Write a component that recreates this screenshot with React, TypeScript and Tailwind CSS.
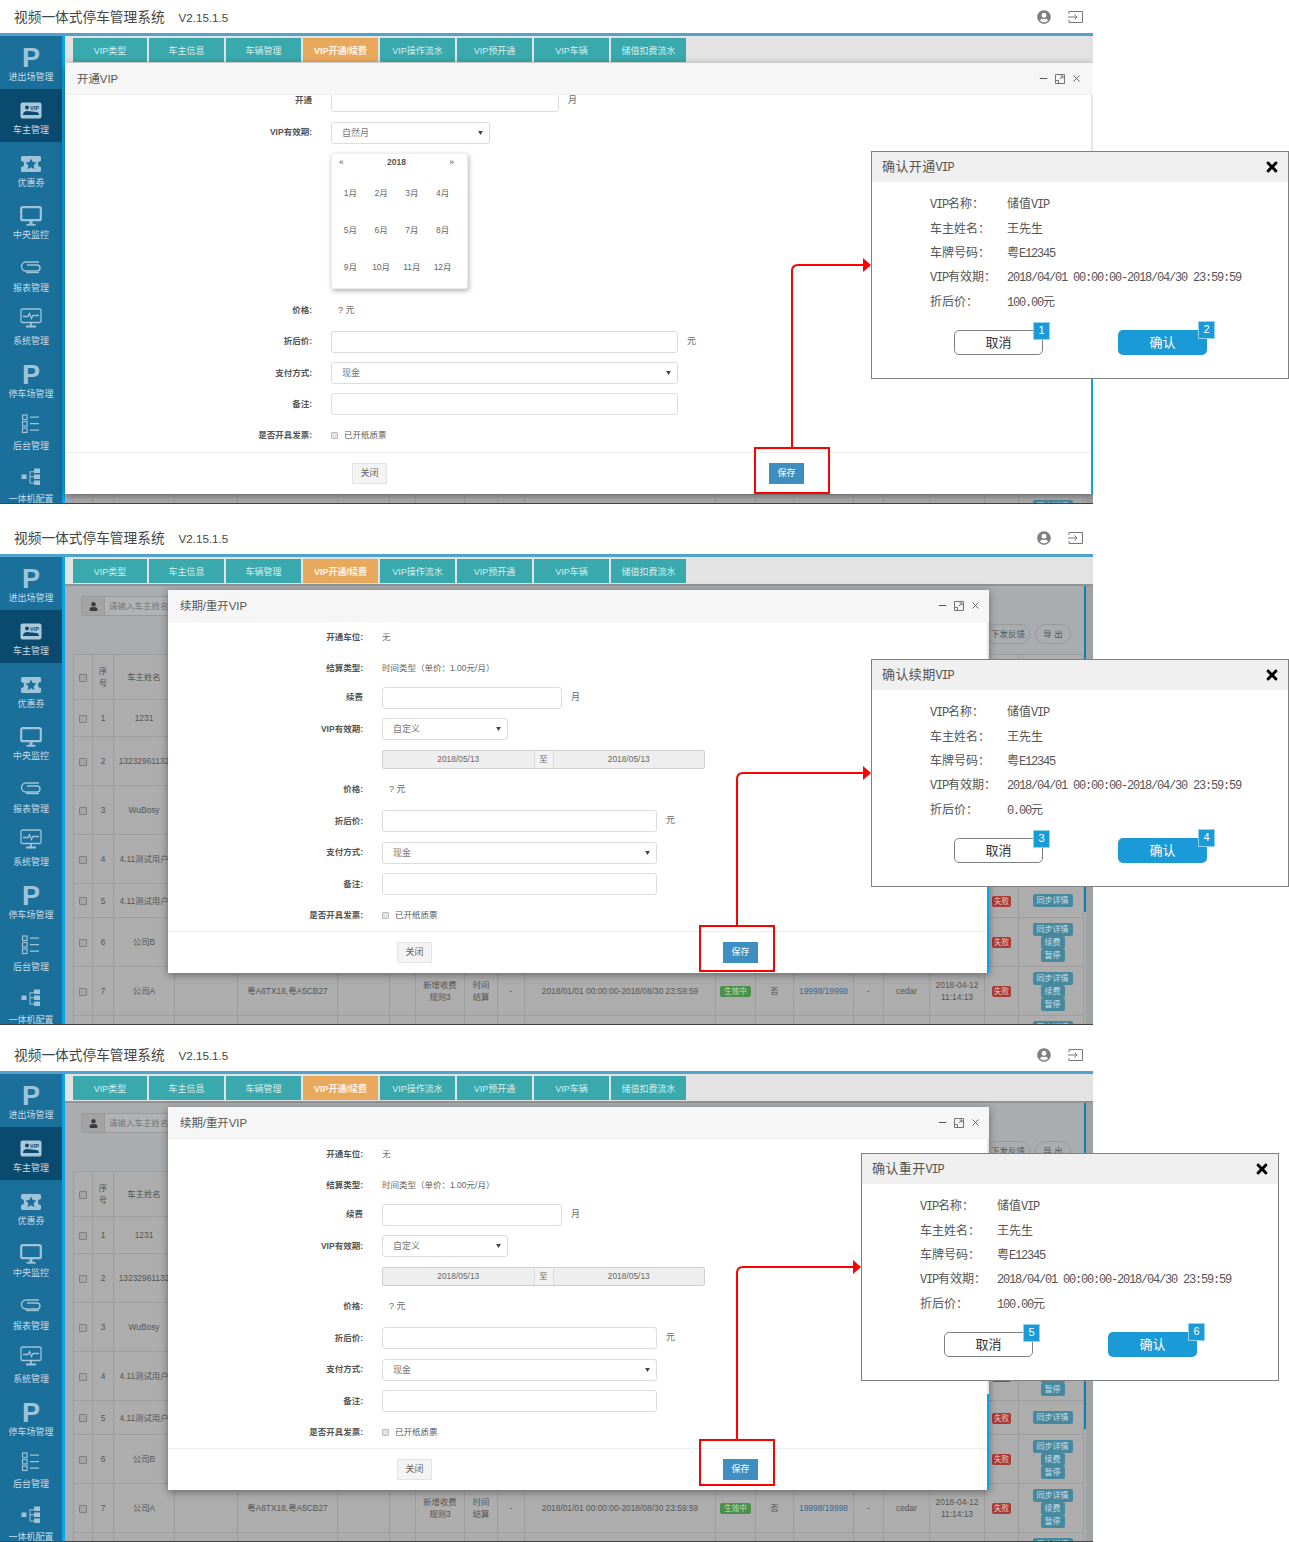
import { ReactNode } from "react";
import { Minus, X } from "lucide-react";
import { FaTimes, FaUser, FaUserCircle } from "react-icons/fa";

const tabs = [
  { label: "VIP类型", w: "w-[74px]" },
  { label: "车主信息", w: "w-[75px]" },
  { label: "车辆管理", w: "w-[75px]" },
  { label: "VIP开通/续费", w: "w-[75px]", active: true },
  { label: "VIP操作流水", w: "w-[75px]" },
  { label: "VIP预开通", w: "w-[75px]" },
  { label: "VIP车辆", w: "w-[75px]" },
  { label: "储值扣费流水", w: "w-[75px]" },
];

function PIcon() {
  return <span className="block text-[27px] leading-[22px] font-bold text-[#9fc4d8]">P</span>;
}

function CardIcon() {
  return (
    <svg viewBox="0 0 22 17" className="h-[17px] w-[22px]">
      <rect width="21" height="16" x="0.5" y="0.5" rx="2" fill="#a9c9da" />
      <circle cx="7" cy="5.5" r="2" fill="#0a4a6e" />
      <path d="M3 13c0-3 2-4 4-4s7 1 9 1 3 1 3 3z" fill="#0a4a6e" />
      <text x="10" y="7.5" fontSize="5.5" fontWeight="700" fill="#0a4a6e" fontFamily="Liberation Sans">VIP</text>
    </svg>
  );
}

function TicketIcon() {
  return (
    <svg viewBox="0 0 22 18" className="h-[18px] w-[22px]">
      <path
        d="M2.500 1h17A1.500 1.500 0 0 1 21 2.500V6a3 3 0 0 0 0 6v3.500a1.500 1.500 0 0 1-1.500 1.500h-17A1.500 1.500 0 0 1 1 15.500V12a3 3 0 0 0 0-6V2.500A1.500 1.500 0 0 1 2.500 1z"
        fill="#9fc4d8"
      />
      <path d="M11 3.500l1.700 3.600 3.800.5-2.800 2.700.7 3.900-3.400-1.900-3.400 1.900.7-3.900-2.800-2.700 3.800-.5z" fill="#1b6f9b" />
    </svg>
  );
}

function MonitorIcon() {
  return (
    <svg viewBox="0 0 22 20" className="h-[20px] w-[22px]" fill="none" stroke="#9fc4d8">
      <rect x="1.200" y="1.200" width="19.600" height="13" rx="1.500" strokeWidth="2.200" />
      <path d="M11 15v3" strokeWidth="3" />
      <path d="M6.500 18.800h9" strokeWidth="1.800" />
    </svg>
  );
}

function ClipIcon() {
  return (
    <svg viewBox="0 0 22 14" className="mb-[4px] h-[14px] w-[22px]" fill="none" stroke="#9fc4d8" strokeWidth="1.400">
      <path d="M7 4h10a3 3 0 0 1 0 6H6a4.500 4.500 0 0 1 0-9h13" transform="translate(0 1)" />
      <path d="M19 12.500H6" />
    </svg>
  );
}

function PulseIcon() {
  return (
    <svg viewBox="0 0 22 20" className="mb-[8px] h-[20px] w-[22px]" fill="none" stroke="#9fc4d8" strokeWidth="1.300">
      <rect x="1" y="1" width="20" height="13.500" rx="1.500" />
      <path d="M3 8.500h5l1.500-3 2 5 1.500-3h6" />
      <path d="M11 15v3M6 18.500h10" strokeWidth="1.800" />
    </svg>
  );
}

function ListIcon() {
  return (
    <svg viewBox="0 0 20 20" className="mb-[6px] h-[20px] w-[20px]" fill="none" stroke="#9fc4d8" strokeWidth="1.200">
      <rect x="1.500" y="1" width="4.500" height="4.500" />
      <rect x="1.500" y="7.500" width="4.500" height="4.500" />
      <rect x="1.500" y="14" width="4.500" height="4.500" />
      <path d="M9 3.200h9M9 9.700h9M9 16.200h9" />
    </svg>
  );
}

function TreeIcon() {
  return (
    <svg viewBox="0 0 20 18" className="mb-[6px] h-[18px] w-[20px]" fill="#9fc4d8">
      <rect x="0.500" y="6.500" width="5" height="4.500" />
      <rect x="13" y="0.500" width="6" height="4.500" />
      <rect x="13" y="6.500" width="6" height="4.500" />
      <rect x="13" y="12.500" width="6" height="4.500" />
      <path d="M5 8.300h8v1H9.500v5.300H13v1H8.500V3.300H13v-1 2H9.500v4H5z" />
    </svg>
  );
}

const sideItems = [
  { label: "进出场管理", icon: <PIcon /> },
  { label: "车主管理", icon: <CardIcon />, active: true },
  { label: "优惠券", icon: <TicketIcon /> },
  { label: "中央监控", icon: <MonitorIcon /> },
  { label: "报表管理", icon: <ClipIcon /> },
  { label: "系统管理", icon: <PulseIcon /> },
  { label: "停车场管理", icon: <PIcon /> },
  { label: "后台管理", icon: <ListIcon /> },
  { label: "一体机配置", icon: <TreeIcon /> },
];

function Sidebar() {
  return (
    <aside className="relative flex w-[65px] shrink-0 flex-col overflow-hidden border-r-[3px] border-[#0aa5e8] bg-[#1b6f9b]">
      {sideItems.map((item) => (
        <div
          key={item.label}
          className={`flex h-[52.750px] shrink-0 flex-col items-center ${item.active ? "bg-[#0a4a6e]" : ""}`}
        >
          <div className="mt-[11px] flex h-[22px] items-center justify-center">{item.icon}</div>
          <span className="mt-[2px] text-[9px] leading-[12px] whitespace-nowrap text-[#c6dbe6]">{item.label}</span>
        </div>
      ))}
      <div className="absolute right-[-3px] bottom-0 h-[6px] w-[3px] bg-white" />
    </aside>
  );
}

const colClasses = [
  "w-[19px]", "w-[21px]", "w-[61px]", "w-[63px]", "w-[100px]", "w-[52px]", "w-[26px]", "w-[49px]", "w-[33px]", "w-[27px]",
  "w-[191px]", "w-[40px]", "w-[38px]", "w-[60px]", "w-[30px]", "w-[46px]", "w-[55px]", "w-[34px]", "w-[65px]",
];

const headers = ["", "序号", "车主姓名", "手机号码", "车牌号码", "车位", "组", "收费规则", "结算类型", "余额", "有效期", "状态", "纸质", "已用/总数", "备注", "操作员", "操作时间", "同步", "操作"];

const rows = [
  { h: "h-[37px]", no: 1, name: "1231", ops: 0 },
  { h: "h-[49px]", no: 2, name: "13232961132", ops: 1 },
  { h: "h-[49px]", no: 3, name: "WuBosy", ops: 1 },
  { h: "h-[49px]", no: 4, name: "4.11测试用户", ops: 3, fail: true },
  { h: "h-[34px]", no: 5, name: "4.11测试用户", ops: 1, fail: true },
  { h: "h-[49px]", no: 6, name: "公司B", ops: 3, fail: true },
  { h: "h-[49px]", no: 7, name: "公司A", ops: 3, fail: true, full: true },
  { h: "h-[49px]", no: 8, name: "公司C", ops: 3 },
];

function OpButton({ wide, children }: { wide?: boolean; children: ReactNode }) {
  return (
    <span
      className={`block h-[13px] rounded-[2px] bg-[#46899f] text-[8px] leading-[13px] text-[#c9dfe6] ${wide ? "w-[40px]" : "w-[24px]"}`}
    >
      {children}
    </span>
  );
}

function Cell({ children }: { children?: ReactNode }) {
  return <td className="overflow-hidden border-r border-b border-[#9d9d9d] p-0 text-center">{children}</td>;
}

function BoxMark() {
  return <span className="inline-block h-[8px] w-[8px] rounded-[1px] border border-[#808080] bg-[#a4a4a4] align-middle" />;
}

function BackTable() {
  return (
    <table className="w-[1010px] table-fixed border-collapse border-t border-l border-[#9d9d9d] bg-[#adadad] text-[8.400px] leading-[12px] text-[#555]">
      <colgroup>
        {colClasses.map((c, i) => (
          <col key={i} className={c} />
        ))}
      </colgroup>
      <thead>
        <tr className="h-[45px]">
          {headers.map((h, i) => (
            <th key={i} className={`overflow-hidden border-r border-b border-[#9d9d9d] p-0 text-center font-normal ${i === 1 ? "px-[5px]" : ""}`}>
              {i === 0 ? <BoxMark /> : h}
            </th>
          ))}
        </tr>
      </thead>
      <tbody>
        {rows.map((r) => (
          <tr key={r.no} className={r.h}>
            <Cell>
              <BoxMark />
            </Cell>
            <Cell>{r.no}</Cell>
            <Cell>
              <span className="whitespace-nowrap">{r.name}</span>
            </Cell>
            <Cell />
            <Cell>{r.full ? "粤A6TX18,粤A5CB27" : ""}</Cell>
            <Cell />
            <Cell />
            <Cell>{r.full ? <span className="inline-block w-[36px]">新增收费规则3</span> : ""}</Cell>
            <Cell>{r.full ? <span className="inline-block w-[18px]">时间结算</span> : ""}</Cell>
            <Cell>{r.full ? "-" : ""}</Cell>
            <Cell>{r.full ? <span className="whitespace-nowrap">2018/01/01 00:00:00-2018/08/30 23:59:59</span> : ""}</Cell>
            <Cell>
              {r.full && (
                <span className="inline-block h-[11px] rounded-[2px] bg-[#4a8f4a] px-[4px] text-[7.500px] leading-[11px] text-[#bfe0bf]">
                  生效中
                </span>
              )}
            </Cell>
            <Cell>{r.full ? "否" : ""}</Cell>
            <Cell>{r.full ? <span className="text-[#33688f]">19998/19998</span> : ""}</Cell>
            <Cell>{r.full ? "-" : ""}</Cell>
            <Cell>{r.full ? "cedar" : ""}</Cell>
            <Cell>{r.full ? "2018-04-12 11:14:13" : ""}</Cell>
            <Cell>
              {r.fail && (
                <span className="inline-block h-[11px] rounded-[2px] bg-[#a83a38] px-[2px] text-[7.500px] leading-[11px] text-[#e9c6c5]">
                  失败
                </span>
              )}
            </Cell>
            <Cell>
              {r.ops > 0 && (
                <div className="flex flex-col items-center pl-[3px]">
                  <OpButton wide>同步详情</OpButton>
                  {r.ops === 3 && <OpButton>续费</OpButton>}
                  {r.ops === 3 && <OpButton>暂停</OpButton>}
                </div>
              )}
            </Cell>
          </tr>
        ))}
      </tbody>
    </table>
  );
}

function BackContent() {
  return (
    <div className="relative min-h-0 flex-1 overflow-hidden border-t-2 border-[#909395] bg-[#a9adb0] pr-[10px] pl-[8px]">
      <div className="flex h-[68px] flex-col">
        <div className="mt-[10px] ml-[8px] flex h-[20px]">
          <span className="flex w-[24px] items-center justify-center rounded-l-[2px] border border-[#999] bg-[#a3a3a3]">
            <FaUser className="size-[9px] text-[#3a3a3a]" />
          </span>
          <span className="flex w-[150px] items-center border-y border-r border-[#999] bg-[#b0b3b5] pl-[4px] text-[8.500px] whitespace-nowrap text-[#777]">
            请输入车主姓名
          </span>
        </div>
        <div className="mt-[8px] flex justify-end gap-[5px] pr-[12px]">
          <span className="flex h-[20px] w-[44px] items-center justify-center rounded-full border border-[#999] text-[8.500px] text-[#555]">
            下发反馈
          </span>
          <span className="flex h-[20px] w-[36px] items-center justify-center rounded-full border border-[#999] text-[8.500px] text-[#555]">
            导 出
          </span>
        </div>
      </div>
      <BackTable />
      <div className="absolute top-0 right-0 bottom-0 w-[7px] bg-[#9fa2a3]" />
      <div className="absolute top-0 right-[7px] h-[326px] w-[2px] bg-[#0d7fb5]" />
    </div>
  );
}

function ModalHeader({ title, pr }: { title: string; pr: string }) {
  return (
    <div className={`flex h-[32px] shrink-0 items-center justify-between border-b border-[#f0f0f0] bg-[#f6f6f6] pl-[12px] ${pr}`}>
      <span className="pt-[2px] text-[11.400px] text-[#555]">{title}</span>
      <div className="flex items-center gap-[6px] text-[#555]">
        <Minus className="size-[11px]" strokeWidth={2.600} />
        <svg viewBox="0 0 10 10" className="size-[10px]" fill="none" stroke="#666" strokeWidth="0.900">
          <path d="M.5 .5h9v9h-9zM5 5l3-3M5.500 2h2.500v2.500M.5 6.500h3v3" />
        </svg>
        <X className="size-[11px]" strokeWidth={2} />
      </div>
    </div>
  );
}

function Caret() {
  return (
    <svg viewBox="0 0 6 5" className="h-[4px] w-[5px]">
      <path d="M0 0h6L3 5z" fill="#444" />
    </svg>
  );
}

function Input({ w }: { w: string }) {
  return <div className={`h-[22px] rounded-[3px] border border-[#dcdcdc] bg-white ${w}`} />;
}

function Select({ w, text }: { w: string; text: string }) {
  return (
    <div className={`flex h-[22px] items-center justify-between rounded-[3px] border border-[#dcdcdc] bg-white pr-[6px] pl-[10px] text-[9px] text-[#777] ${w}`}>
      <span className="pt-[2px]">{text}</span>
      <Caret />
    </div>
  );
}

function Row({ h, labelW, label, children }: { h: string; labelW: string; label?: string; children?: ReactNode }) {
  return (
    <div className={`flex shrink-0 items-center gap-[19px] ${h}`}>
      <span className={`shrink-0 text-right text-[8.500px] font-bold text-[#555] ${labelW}`}>{label}</span>
      {children}
    </div>
  );
}

function Unit({ children }: { children: ReactNode }) {
  return <span className="-ml-[10px] text-[9px] text-[#666]">{children}</span>;
}

function Check() {
  return (
    <div className="flex items-center gap-[6px] text-[8.500px] text-[#555]">
      <span className="h-[7px] w-[7px] rounded-[1px] border border-[#bbb] bg-[#e4e4e4]" />
      <span>已开纸质票</span>
    </div>
  );
}

function Footer({ closeMl, saveMl }: { closeMl: string; saveMl: string }) {
  return (
    <div className="flex h-[42px] shrink-0 items-center border-t border-[#eeeeee]">
      <span className={`flex h-[21px] w-[35px] items-center justify-center border border-[#e4e4e4] bg-[#f4f4f4] text-[9px] text-[#666] ${closeMl}`}>
        关闭
      </span>
      <span className={`flex h-[21px] w-[35px] items-center justify-center bg-[#3e8fc0] text-[9px] text-white ${saveMl}`}>保存</span>
    </div>
  );
}

const months = ["1月", "2月", "3月", "4月", "5月", "6月", "7月", "8月", "9月", "10月", "11月", "12月"];

function Calendar() {
  return (
    <div className="h-[136px] w-[137px] rounded-[3px] border border-[#eeeeee] bg-white shadow-[1px_2px_5px_rgba(0,0,0,0.3)]">
      <div className="flex h-[16px] items-center justify-between pr-[13px] pl-[7px] text-[8.500px] text-[#555]">
        <span>«</span>
        <span className="font-bold">2018</span>
        <span>»</span>
      </div>
      <div className="mt-[5px] grid grid-cols-4 pr-[9px] pl-[3px]">
        {months.map((m) => (
          <span key={m} className="flex h-[37px] items-center justify-center text-[8.500px] text-[#666]">
            {m}
          </span>
        ))}
      </div>
    </div>
  );
}

function SideStrip({ topH }: { topH: string }) {
  return (
    <div className="absolute top-[32px] right-0 bottom-0 flex w-[2px] flex-col">
      <div className={`bg-[#e8e8e8] ${topH}`} />
      <div className="flex-1 bg-[#0aa5e8]" />
    </div>
  );
}

function OpenModal() {
  const w = "w-[247px]";
  return (
    <div className="absolute top-[63px] left-[65px] flex h-[431px] w-[1028px] flex-col bg-white shadow-[0_2px_8px_rgba(0,0,0,0.4)]">
      <ModalHeader title="开通VIP" pr="pr-[11px]" />
      <div className="flex min-h-0 flex-1 flex-col overflow-hidden">
        <div className="-mt-[5px]">
          <Row h="h-[21px]" labelW={w} label="开通">
            <Input w="w-[228px]" />
            <Unit>月</Unit>
          </Row>
        </div>
        <div className="h-[5px] shrink-0" />
        <Row h="h-[33px]" labelW={w} label="VIP有效期:">
          <Select w="w-[159px]" text="自然月" />
        </Row>
        <div className="flex h-[144px] shrink-0 items-start gap-[19px] pt-[4px]">
          <span className={`shrink-0 ${w}`} />
          <Calendar />
        </div>
        <Row h="h-[34px]" labelW={w} label="价格:">
          <span className="ml-[7px] pt-[2px] text-[9px] text-[#666]">? 元</span>
        </Row>
        <Row h="h-[29px]" labelW={w} label="折后价:">
          <Input w="w-[347px]" />
          <Unit>元</Unit>
        </Row>
        <Row h="h-[34px]" labelW={w} label="支付方式:">
          <Select w="w-[347px]" text="现金" />
        </Row>
        <Row h="h-[28px]" labelW={w} label="备注:">
          <Input w="w-[347px]" />
        </Row>
        <Row h="h-[34px]" labelW={w} label="是否开具发票:">
          <Check />
        </Row>
      </div>
      <Footer closeMl="ml-[287px]" saveMl="ml-[382px]" />
      <SideStrip topH="h-[56px]" />
    </div>
  );
}

function RenewModal() {
  const w = "w-[195px]";
  return (
    <div className="absolute top-[69px] left-[168px] flex h-[383px] w-[821px] flex-col bg-white shadow-[0_2px_8px_rgba(0,0,0,0.4)]">
      <ModalHeader title="续期/重开VIP" pr="pr-[8px]" />
      <div className="flex min-h-0 flex-1 flex-col overflow-hidden">
        <Row h="h-[30px]" labelW={w} label="开通车位:">
          <span className="text-[8.500px] text-[#777]">无</span>
        </Row>
        <Row h="h-[32px]" labelW={w} label="结算类型:">
          <span className="text-[8.500px] text-[#666]">时间类型（单价：1.00元/月）</span>
        </Row>
        <Row h="h-[27px]" labelW={w} label="续费">
          <Input w="w-[180px]" />
          <Unit>月</Unit>
        </Row>
        <Row h="h-[36px]" labelW={w} label="VIP有效期:">
          <Select w="w-[126px]" text="自定义" />
        </Row>
        <Row h="h-[25px]" labelW={w}>
          <div className="flex h-[19px] w-[323px] rounded-[2px] border border-[#cfcfcf] bg-[#eeeeee] text-[8.400px] text-[#666]">
            <span className="flex flex-1 items-center justify-center">2018/05/13</span>
            <span className="flex w-[20px] items-center justify-center border-x border-[#dddddd] bg-[#f2f2f2]">至</span>
            <span className="flex flex-1 items-center justify-center">2018/05/13</span>
          </div>
        </Row>
        <Row h="h-[34px]" labelW={w} label="价格:">
          <span className="ml-[7px] pt-[2px] text-[9px] text-[#666]">? 元</span>
        </Row>
        <Row h="h-[30px]" labelW={w} label="折后价:">
          <Input w="w-[275px]" />
          <Unit>元</Unit>
        </Row>
        <Row h="h-[33px]" labelW={w} label="支付方式:">
          <Select w="w-[275px]" text="现金" />
        </Row>
        <Row h="h-[30px]" labelW={w} label="备注:">
          <Input w="w-[275px]" />
        </Row>
        <Row h="h-[32px]" labelW={w} label="是否开具发票:">
          <Check />
        </Row>
      </div>
      <Footer closeMl="ml-[229px]" saveMl="ml-[291px]" />
      <SideStrip topH="h-[255px]" />
    </div>
  );
}

// latin runs sit at half the CJK advance, like the bitmap font of the mockup
function Mixed({ text }: { text: string }) {
  const parts = text.match(/[\x20-\x7e]+|[^\x20-\x7e]+/g) ?? [];
  return (
    <>
      {parts.map((p, i) =>
        /^[\x20-\x7e]/.test(p) ? (
          <span key={i} className="font-['Liberation_Mono',monospace] text-[12px] tracking-[-1.200px] whitespace-pre">
            {p}
          </span>
        ) : (
          <span key={i}>{p}</span>
        ),
      )}
    </>
  );
}

function Badge({ n }: { n: number }) {
  return (
    <span className="absolute -top-[9px] -right-[8px] flex h-[18px] w-[17px] items-center justify-center border border-[#8fd3f4] bg-[#1a9ad6] text-[11px] text-white">
      {n}
    </span>
  );
}

function ConfirmDialog({
  pos,
  title,
  price,
  badges,
}: {
  pos: string;
  title: string;
  price: string;
  badges: [number, number];
}) {
  const info = [
    ["VIP名称：", "储值VIP"],
    ["车主姓名：", "王先生"],
    ["车牌号码：", "粤E12345"],
    ["VIP有效期：", "2018/04/01 00:00:00-2018/04/30 23:59:59"],
    ["折后价：", price],
  ];
  return (
    <div className={`absolute h-[228px] w-[418px] border border-[#808080] bg-white text-[12px] leading-[24.500px] text-[#555] ${pos}`}>
      <div className="flex h-[30px] items-center justify-between bg-[#f0f0f0] pr-[8px] pl-[10px]">
        <span className="pt-[2px] text-[13px] tracking-[0.4px]">
          <Mixed text={title} />
        </span>
        <FaTimes className="size-[16px] text-black" />
      </div>
      <div className="pt-[10px] pl-[58px]">
        {info.map(([k, v]) => (
          <div key={k} className="flex h-[24.500px] items-center">
            <span className="w-[77px] shrink-0 whitespace-nowrap">
              <Mixed text={k} />
            </span>
            <span className="whitespace-nowrap">
              <Mixed text={v} />
            </span>
          </div>
        ))}
      </div>
      <div className="mt-[15px] flex gap-[75px] pl-[82px]">
        <button className="relative h-[25px] w-[89px] rounded-[5px] border border-[#808080] bg-white text-[13px] leading-[23px] text-[#333]">
          取消
          <Badge n={badges[0]} />
        </button>
        <button className="relative h-[25px] w-[89px] rounded-[5px] bg-[#1a9ad6] text-[13px] leading-[25px] text-white">
          确认
          <Badge n={badges[1]} />
        </button>
      </div>
    </div>
  );
}

function Connector({ x, top, bottom, end }: { x: number; top: number; bottom: number; end: number }) {
  return (
    <svg viewBox="0 0 1289 504" className="pointer-events-none absolute top-0 left-0 h-[504px] w-[1289px]">
      <path d={`M${x} ${bottom}V${top + 6}Q${x} ${top} ${x + 6} ${top}H${end - 6}`} fill="none" stroke="#ff0000" strokeWidth="2" />
      <path d={`M${end - 8} ${top - 7}L${end} ${top}L${end - 8} ${top + 7}z`} fill="#ff0000" />
    </svg>
  );
}

function Screen({ modal, children, mt }: { modal: ReactNode; children: ReactNode; mt?: string }) {
  return (
    <section className={`relative h-[504px] w-full ${mt ?? ""}`}>
      <div className="relative flex h-full w-[1093px] flex-col overflow-hidden bg-white">
        <header className="flex h-[36px] shrink-0 items-center border-b-[3px] border-[#4fa3cc] pt-[3px] pr-[10px] pl-[14px]">
          <span className="text-[13.700px] text-[#444]">视频一体式停车管理系统</span>
          <span className="ml-[14px] text-[11.600px] text-[#444]">V2.15.1.5</span>
          <FaUserCircle className="mr-[17px] ml-auto size-[14px] -translate-y-[1px] text-[#7f7f7f]" />
          <svg viewBox="0 0 15 12" className="h-[12px] w-[15px] -translate-y-[1px]" fill="none" stroke="#777" strokeWidth="1">
            <path d="M1 3V.5h13.500v11H1V9M0 6h9M6.500 3.500L9 6 6.500 8.500" />
          </svg>
        </header>
        <div className="flex min-h-0 flex-1">
          <Sidebar />
          <div className="flex min-w-0 flex-1 flex-col">
            <nav className="flex h-[27px] shrink-0 gap-[2px] bg-[#e3e3e3] pt-[2px] pl-[8px]">
              {tabs.map((t) => (
                <span
                  key={t.label}
                  className={`flex h-[24px] items-center justify-center pt-[3px] text-[9px] whitespace-nowrap text-[#d6eeee] ${t.w} ${t.active ? "bg-[#e8a95d] font-bold text-[#fff6ea]" : "bg-[#3aa9ad]"}`}
                >
                  {t.label}
                </span>
              ))}
            </nav>
            <BackContent />
          </div>
        </div>
        <div className="h-px shrink-0 bg-[#444]" />
        {modal}
      </div>
      {children}
    </section>
  );
}

function RedBox({ pos }: { pos: string }) {
  return <div className={`absolute h-[47px] w-[76px] border-2 border-[#ff0000] ${pos}`} />;
}

export default function App() {
  return (
    <div className="w-[1289px] bg-white font-['Liberation_Sans','Noto_Sans_CJK_SC',sans-serif]">
      <Screen modal={<OpenModal />}>
        <Connector x={792} top={265} bottom={448} end={871} />
        <RedBox pos="top-[447px] left-[754px]" />
        <ConfirmDialog pos="top-[151px] left-[871px]" title="确认开通VIP" price="100.00元" badges={[1, 2]} />
      </Screen>
      <Screen mt="mt-[17px]" modal={<RenewModal />}>
        <Connector x={737} top={252} bottom={405} end={871} />
        <RedBox pos="top-[404px] left-[699px]" />
        <ConfirmDialog pos="top-[138px] left-[871px]" title="确认续期VIP" price="0.00元" badges={[3, 4]} />
      </Screen>
      <Screen mt="mt-[13px]" modal={<RenewModal />}>
        <Connector x={737} top={229} bottom={402} end={861} />
        <RedBox pos="top-[401px] left-[699px]" />
        <ConfirmDialog pos="top-[115px] left-[861px]" title="确认重开VIP" price="100.00元" badges={[5, 6]} />
      </Screen>
    </div>
  );
}
